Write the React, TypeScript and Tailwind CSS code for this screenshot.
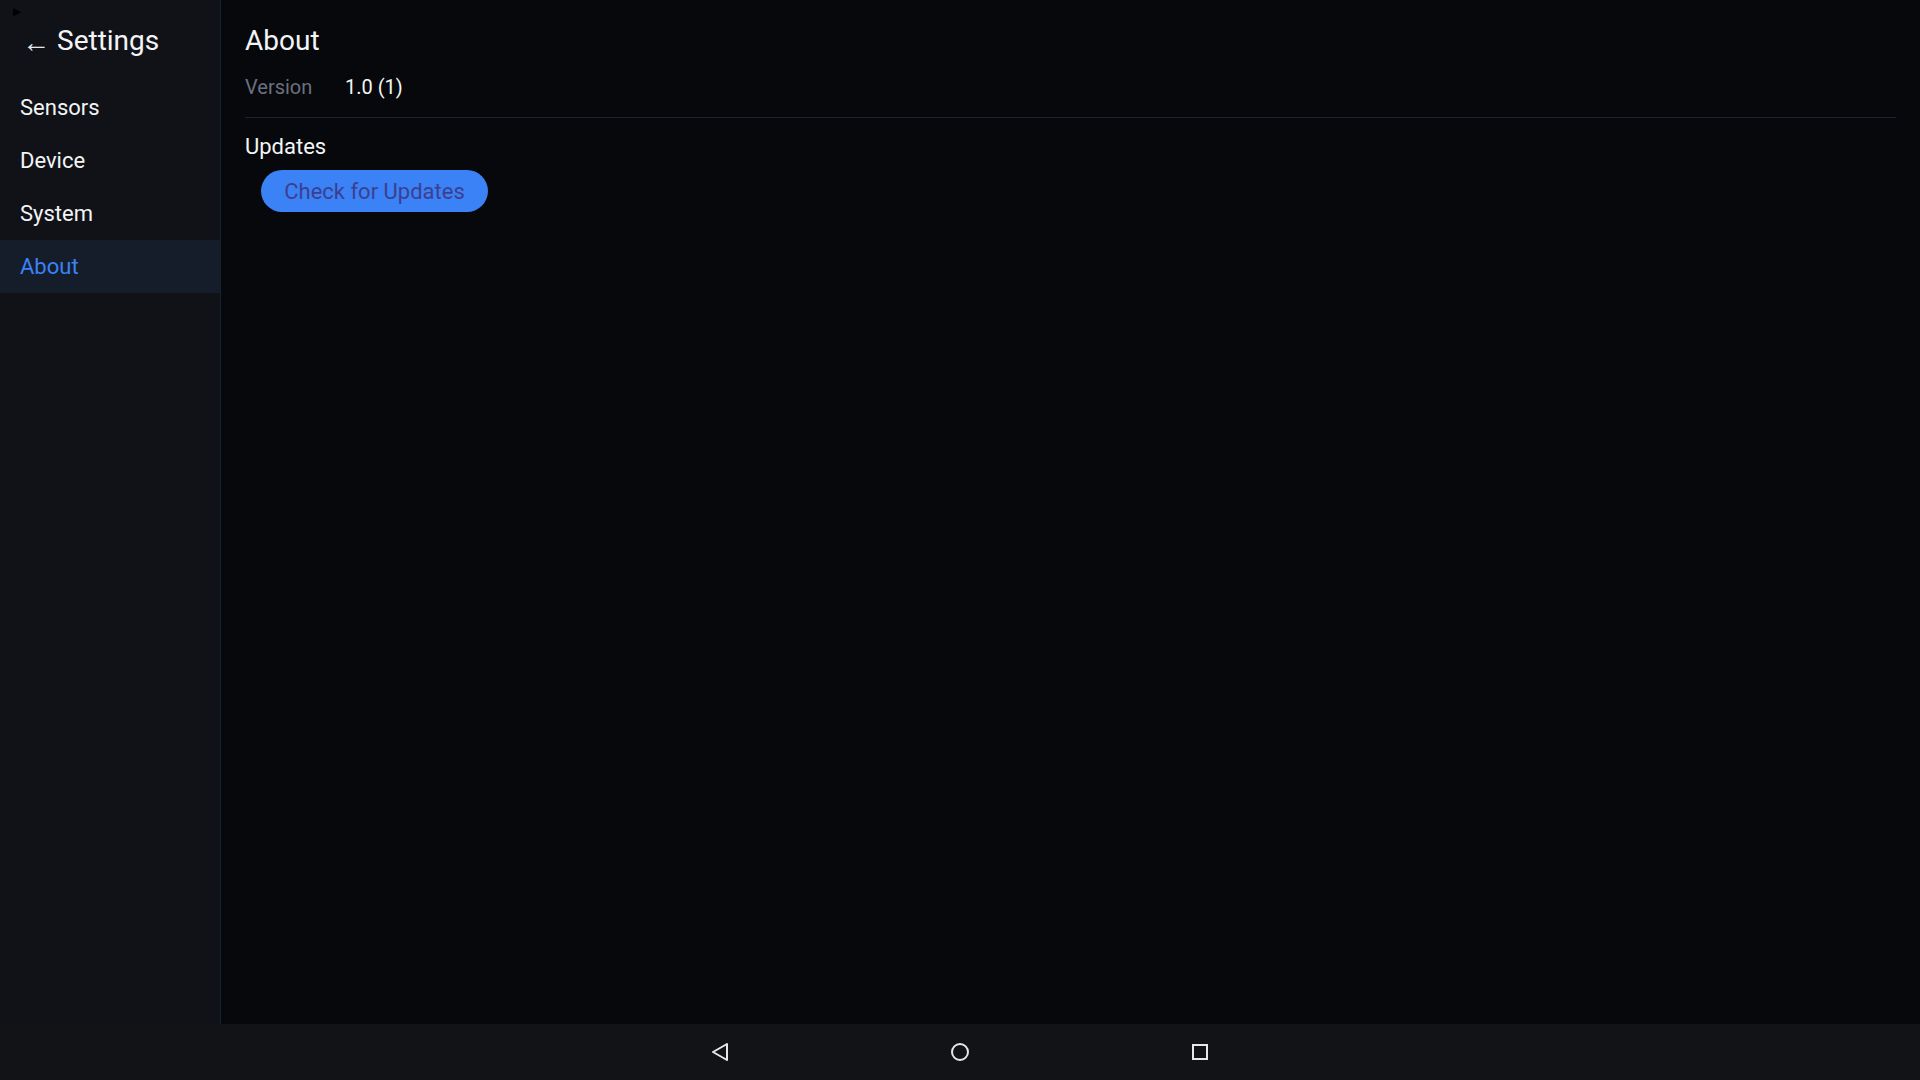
import React from 'react';

const NAV_ITEMS = ['Sensors', 'Device', 'System', 'About'];

const Sidebar: React.FC<{ active: string }> = ({ active }) => (
  <aside className="relative w-[221px] shrink-0 bg-[#111217] border-r border-[#172031] flex flex-col">
    {/* stray dev toggle in the corner */}
    <span className="absolute left-[13px] top-[6px] text-[11px] leading-none text-black">▶</span>

    <div className="h-[81px] flex items-center pl-[22px]">
      <span className="text-[28px] leading-none text-[#e5e7eb] mt-[5px] mr-[7px]">←</span>
      <span className="text-[28px] text-[#f3f4f6]">Settings</span>
    </div>

    {NAV_ITEMS.map((item) => (
      <div
        key={item}
        className={
          item === active
            ? 'h-[53px] flex items-center pl-[20px] text-[22px] bg-[#151d2b] text-[#3b82f6]'
            : 'h-[53px] flex items-center pl-[20px] text-[22px] text-[#f3f4f6]'
        }
      >
        {item}
      </div>
    ))}
  </aside>
);

const NavBar: React.FC = () => (
  <div className="h-[56px] shrink-0 bg-[#121316] flex items-center justify-center gap-[221px]">
    <svg width="18" height="20" viewBox="0 0 18 20" fill="none">
      <path d="M16 2 L2 10 L16 18 Z" stroke="#e5e7eb" strokeWidth="2" strokeLinejoin="round" />
    </svg>
    <svg width="20" height="20" viewBox="0 0 20 20" fill="none">
      <circle cx="10" cy="10" r="8" stroke="#e5e7eb" strokeWidth="2" />
    </svg>
    <svg width="18" height="18" viewBox="0 0 18 18" fill="none">
      <rect x="2" y="2" width="14" height="14" stroke="#e5e7eb" strokeWidth="2" />
    </svg>
  </div>
);

export default function App() {
  return (
    <div className="h-screen w-screen flex flex-col bg-[#07080b] font-['Roboto','Liberation_Sans',sans-serif] overflow-hidden">
      <div className="flex flex-1 min-h-0">
        <Sidebar active="About" />

        <main className="flex-1 flex flex-col pl-[24px] pr-[24px]">
          <h1 className="pt-[24px] text-[28px] leading-[34px] text-[#f3f4f6]">About</h1>

          <div className="mt-[17px] flex items-center text-[20px] leading-[24px]">
            <span className="w-[100px] text-[#6b7080]">Version</span>
            <span className="text-[#f3f4f6]">1.0 (1)</span>
          </div>

          <div className="mt-[18px] h-px bg-[#1c2230]" />

          <h2 className="mt-[16px] text-[22px] leading-[26px] text-[#f3f4f6]">Updates</h2>

          <button className="mt-[10px] ml-[16px] h-[42px] w-[227px] rounded-full bg-[#3b82f6] text-[22px] text-[#3c3f91] flex items-center justify-center">
            Check for Updates
          </button>
        </main>
      </div>

      <NavBar />
    </div>
  );
}
